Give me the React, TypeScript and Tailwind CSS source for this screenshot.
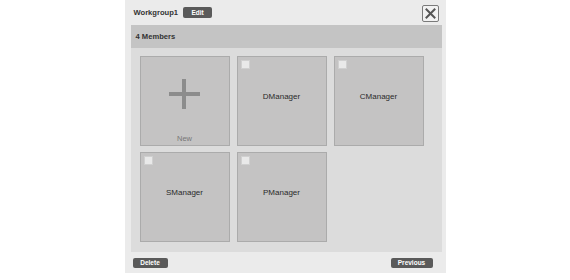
import React from "react";

const members = ["DManager", "CManager", "SManager", "PManager"];

function Tile({ name }: { name: string }) {
  return (
    <div className="relative w-[90px] h-[90px] border border-[#ababab] bg-[#c4c3c3] flex items-center justify-center pb-[9px]">
      <div className="absolute left-[3px] top-[3px] w-[9px] h-[9px] bg-[#e9e9e9] border border-[#d0d0d0]" />
      <span className="text-[8px] text-[#2a2a2a]">{name}</span>
    </div>
  );
}

export default function App() {
  return (
    <div
      className="w-[570px] h-[280px] bg-white"
      style={{ fontFamily: '"Liberation Sans", Arial, sans-serif' }}
    >
      <div className="mx-auto w-[321px] h-[273px] bg-[#ebebeb] flex flex-col pl-[6px] pr-[4px]">
        <div className="h-[25px] flex items-center pl-[3px] pr-[3px]">
          <span className="text-[7.6px] font-bold text-[#333]">Workgroup1</span>
          <div className="ml-[5px] w-[29px] h-[11px] rounded-[2px] bg-[#5a5a5a] flex items-center justify-center">
            <span className="text-[6.5px] font-bold text-white">Edit</span>
          </div>
          <div className="ml-auto mt-[1px] w-[17px] h-[17px] border border-[#7a7a7a] rounded-[2px] bg-[#f2f2f2] flex items-center justify-center">
            <svg width="11" height="11" viewBox="0 0 11 11">
              <path d="M1.5 1.5 L9.5 9.5 M9.5 1.5 L1.5 9.5" stroke="#555" strokeWidth="2" strokeLinecap="square" />
            </svg>
          </div>
        </div>
        <div className="h-[23px] bg-[#c4c4c4] flex items-center pl-[5px]">
          <span className="text-[7.6px] font-bold text-[#333]">4 Members</span>
        </div>
        <div className="h-[204px] bg-[#dcdcdc] pl-[9px] pt-[8px]">
          <div className="grid grid-cols-[90px_90px_90px] gap-x-[7px] gap-y-[6px]">
            <div className="w-[90px] h-[90px] border border-[#ababab] bg-[#c4c3c3] flex flex-col items-center">
              <div className="mt-[22px] relative w-[31px] h-[30px]">
                <div className="absolute left-0 top-[13px] w-[31px] h-[4px] bg-[#8c8c8c]" />
                <div className="absolute left-[13px] top-0 w-[4px] h-[30px] bg-[#8c8c8c]" />
              </div>
              <span className="mt-[24px] text-[7.5px] text-[#777]">New</span>
            </div>
            {members.map((m) => (
              <Tile key={m} name={m} />
            ))}
          </div>
        </div>
        <div className="flex-1 flex items-center justify-between pl-[2px] pr-[9px] pt-[1px]">
          <div className="w-[35px] h-[10px] rounded-[2px] bg-[#5a5a5a] flex items-center justify-center">
            <span className="text-[6.5px] font-bold text-white">Delete</span>
          </div>
          <div className="w-[42px] h-[10px] rounded-[2px] bg-[#5a5a5a] flex items-center justify-center">
            <span className="text-[6.5px] font-bold text-white">Previous</span>
          </div>
        </div>
      </div>
    </div>
  );
}
